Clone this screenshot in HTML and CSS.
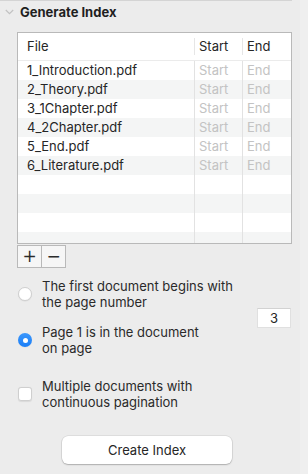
FILE: index.html
```html
<!DOCTYPE html>
<html lang="en">
<head>
  <meta charset="UTF-8" />
  <title>Generate Index</title>
  <link rel="stylesheet" href="styles.css">
</head>
<body>
  <div class="sidebar">
    <div class="panel">
      <div class="section-title">
        <svg class="chevron" width="9" height="6" viewBox="0 0 9 6">
          <path d="M0.8 1 L4.5 4.6 L8.2 1" fill="none" stroke="#c2c2c2" stroke-width="1.2"/>
        </svg>
        <span>Generate Index</span>
      </div>

      <div class="file-table">
        <div class="row head">
          <div class="cell">File</div>
          <div class="cell">Start</div>
          <div class="cell">End</div>
        </div>
        <div class="body" id="tableBody"></div>
      </div>

      <div class="add-remove">
        <button class="sq">+</button>
        <button class="sq">&minus;</button>
      </div>

      <div class="page-options">
        <div class="choices">
          <label class="choice">
            <span class="radio"></span>
            <span class="label-text">The first document begins with<br>the page number</span>
          </label>
          <label class="choice">
            <span class="radio on"></span>
            <span class="label-text">Page 1 is in the document<br>on page</span>
          </label>
        </div>
        <div class="page-field">3</div>
      </div>

      <label class="choice check-row">
        <span class="checkbox"></span>
        <span class="label-text">Multiple documents with<br>continuous pagination</span>
      </label>

      <div class="actions">
        <button class="push">Create Index</button>
      </div>
    </div>
    <div class="track"></div>
  </div>

  <script>
    const files = ['1_Introduction.pdf', '2_Theory.pdf', '3_1Chapter.pdf', '4_2Chapter.pdf', '5_End.pdf', '6_Literature.pdf'];
    const tableBody = document.getElementById('tableBody');
    let html = '';
    for (let i = 0; i < 10; i++) {
      const name = files[i];
      html += `<div class="row${i % 2 ? ' alt' : ''}">
                 <div class="cell">${name || ''}</div>
                 <div class="cell hint">${name ? 'Start' : ''}</div>
                 <div class="cell hint">${name ? 'End' : ''}</div>
               </div>`;
    }
    tableBody.innerHTML = html;
  </script>
</body>
</html>
```

FILE: styles.css
```css
html, body {
  margin: 0;
  padding: 0;
  height: 100%;
}
body {
  background: #ececec;
  font-family: Inter, "Liberation Sans", Arial, sans-serif;
  font-size: 13px;
  color: #262626;
}
.sidebar {
  display: flex;
  height: 474px;
}
.panel {
  width: 300px;
  display: flex;
  flex-direction: column;
}
.track {
  flex: 1;
  background: #efefef;
}
.section-title {
  margin-right: 8px;
  border-top: 1px solid #d4d4d4;
  height: 21px;
  display: flex;
  align-items: center;
  font-weight: 700;
  color: #1f1f1f;
}
.chevron {
  margin: 1px 6px 0 5px;
}
.file-table {
  margin: 10px 0 0 17px;
  width: 273px;
  height: 210px;
  border: 1px solid #b9b9b9;
  background: #fff;
  overflow: hidden;
}
.row {
  display: grid;
  grid-template-columns: 176px 48px 49px;
  height: 19px;
}
.row.alt {
  background: #f4f5f5;
}
.row .cell {
  padding-left: 9px;
  line-height: 19px;
  white-space: nowrap;
  border-left: 1px solid #e2e2e2;
}
.row .cell:first-child {
  border-left: none;
}
.row .cell.hint {
  padding-left: 4px;
  color: #c3c3c3;
}
.row.head {
  height: 27px;
  border-bottom: 1px solid #ebebeb;
  align-items: center;
}
.row.head .cell {
  line-height: 17px;
  padding-left: 4px;
  border-left-color: #e6e6e6;
}
.row.head .cell:first-child {
  padding-left: 9px;
}
.add-remove {
  display: flex;
  margin: 1px 0 0 17px;
}
.sq {
  width: 25px;
  height: 23px;
  padding: 0 0 2px;
  border: 1px solid #b9b9b9;
  background: #f6f6f6;
  font-family: "DejaVu Sans", sans-serif;
  font-size: 17px;
  line-height: 18px;
  color: #2b2b2b;
}
.sq + .sq {
  border-left: none;
  width: 24px;
}
.page-options {
  display: flex;
  align-items: center;
  margin-top: 10px;
  padding-right: 9px;
}
.choices {
  flex: 1;
  display: flex;
  flex-direction: column;
  gap: 14px;
}
.choice {
  display: flex;
  align-items: center;
  padding-left: 18px;
}
.label-text {
  margin-left: 10px;
  line-height: 16px;
  color: #2a2a2a;
}
.radio {
  width: 14px;
  height: 14px;
  border-radius: 50%;
  box-sizing: border-box;
  background: #fff;
  border: 1px solid #cfcfcf;
  box-shadow: 0 0.5px 1px rgba(0,0,0,0.08);
  display: flex;
  align-items: center;
  justify-content: center;
}
.radio.on {
  border: none;
  background: linear-gradient(#3b97fc, #1a7ef7);
}
.radio.on::after {
  content: "";
  width: 5px;
  height: 5px;
  border-radius: 50%;
  background: #fff;
}
.page-field {
  width: 34px;
  height: 20px;
  margin-top: 1px;
  background: #fff;
  border: 1px solid #e0e0e0;
  border-top-color: #d2d2d2;
  box-sizing: border-box;
  text-align: center;
  line-height: 19px;
}
.check-row {
  margin-top: 22px;
}
.checkbox {
  width: 14px;
  height: 14px;
  box-sizing: border-box;
  border-radius: 3px;
  background: #fff;
  border: 1px solid #cfcfcf;
  box-shadow: 0 0.5px 1px rgba(0,0,0,0.08);
}
.actions {
  display: flex;
  justify-content: center;
  margin-top: 26px;
  padding-right: 6px;
}
.push {
  width: 170px;
  height: 28px;
  border: none;
  border-radius: 6px;
  background: #fff;
  box-shadow: 0 0 0 0.5px rgba(0,0,0,0.12), 0 1px 1.5px rgba(0,0,0,0.22);
  font-family: inherit;
  font-size: 13px;
  color: #262626;
}
```
